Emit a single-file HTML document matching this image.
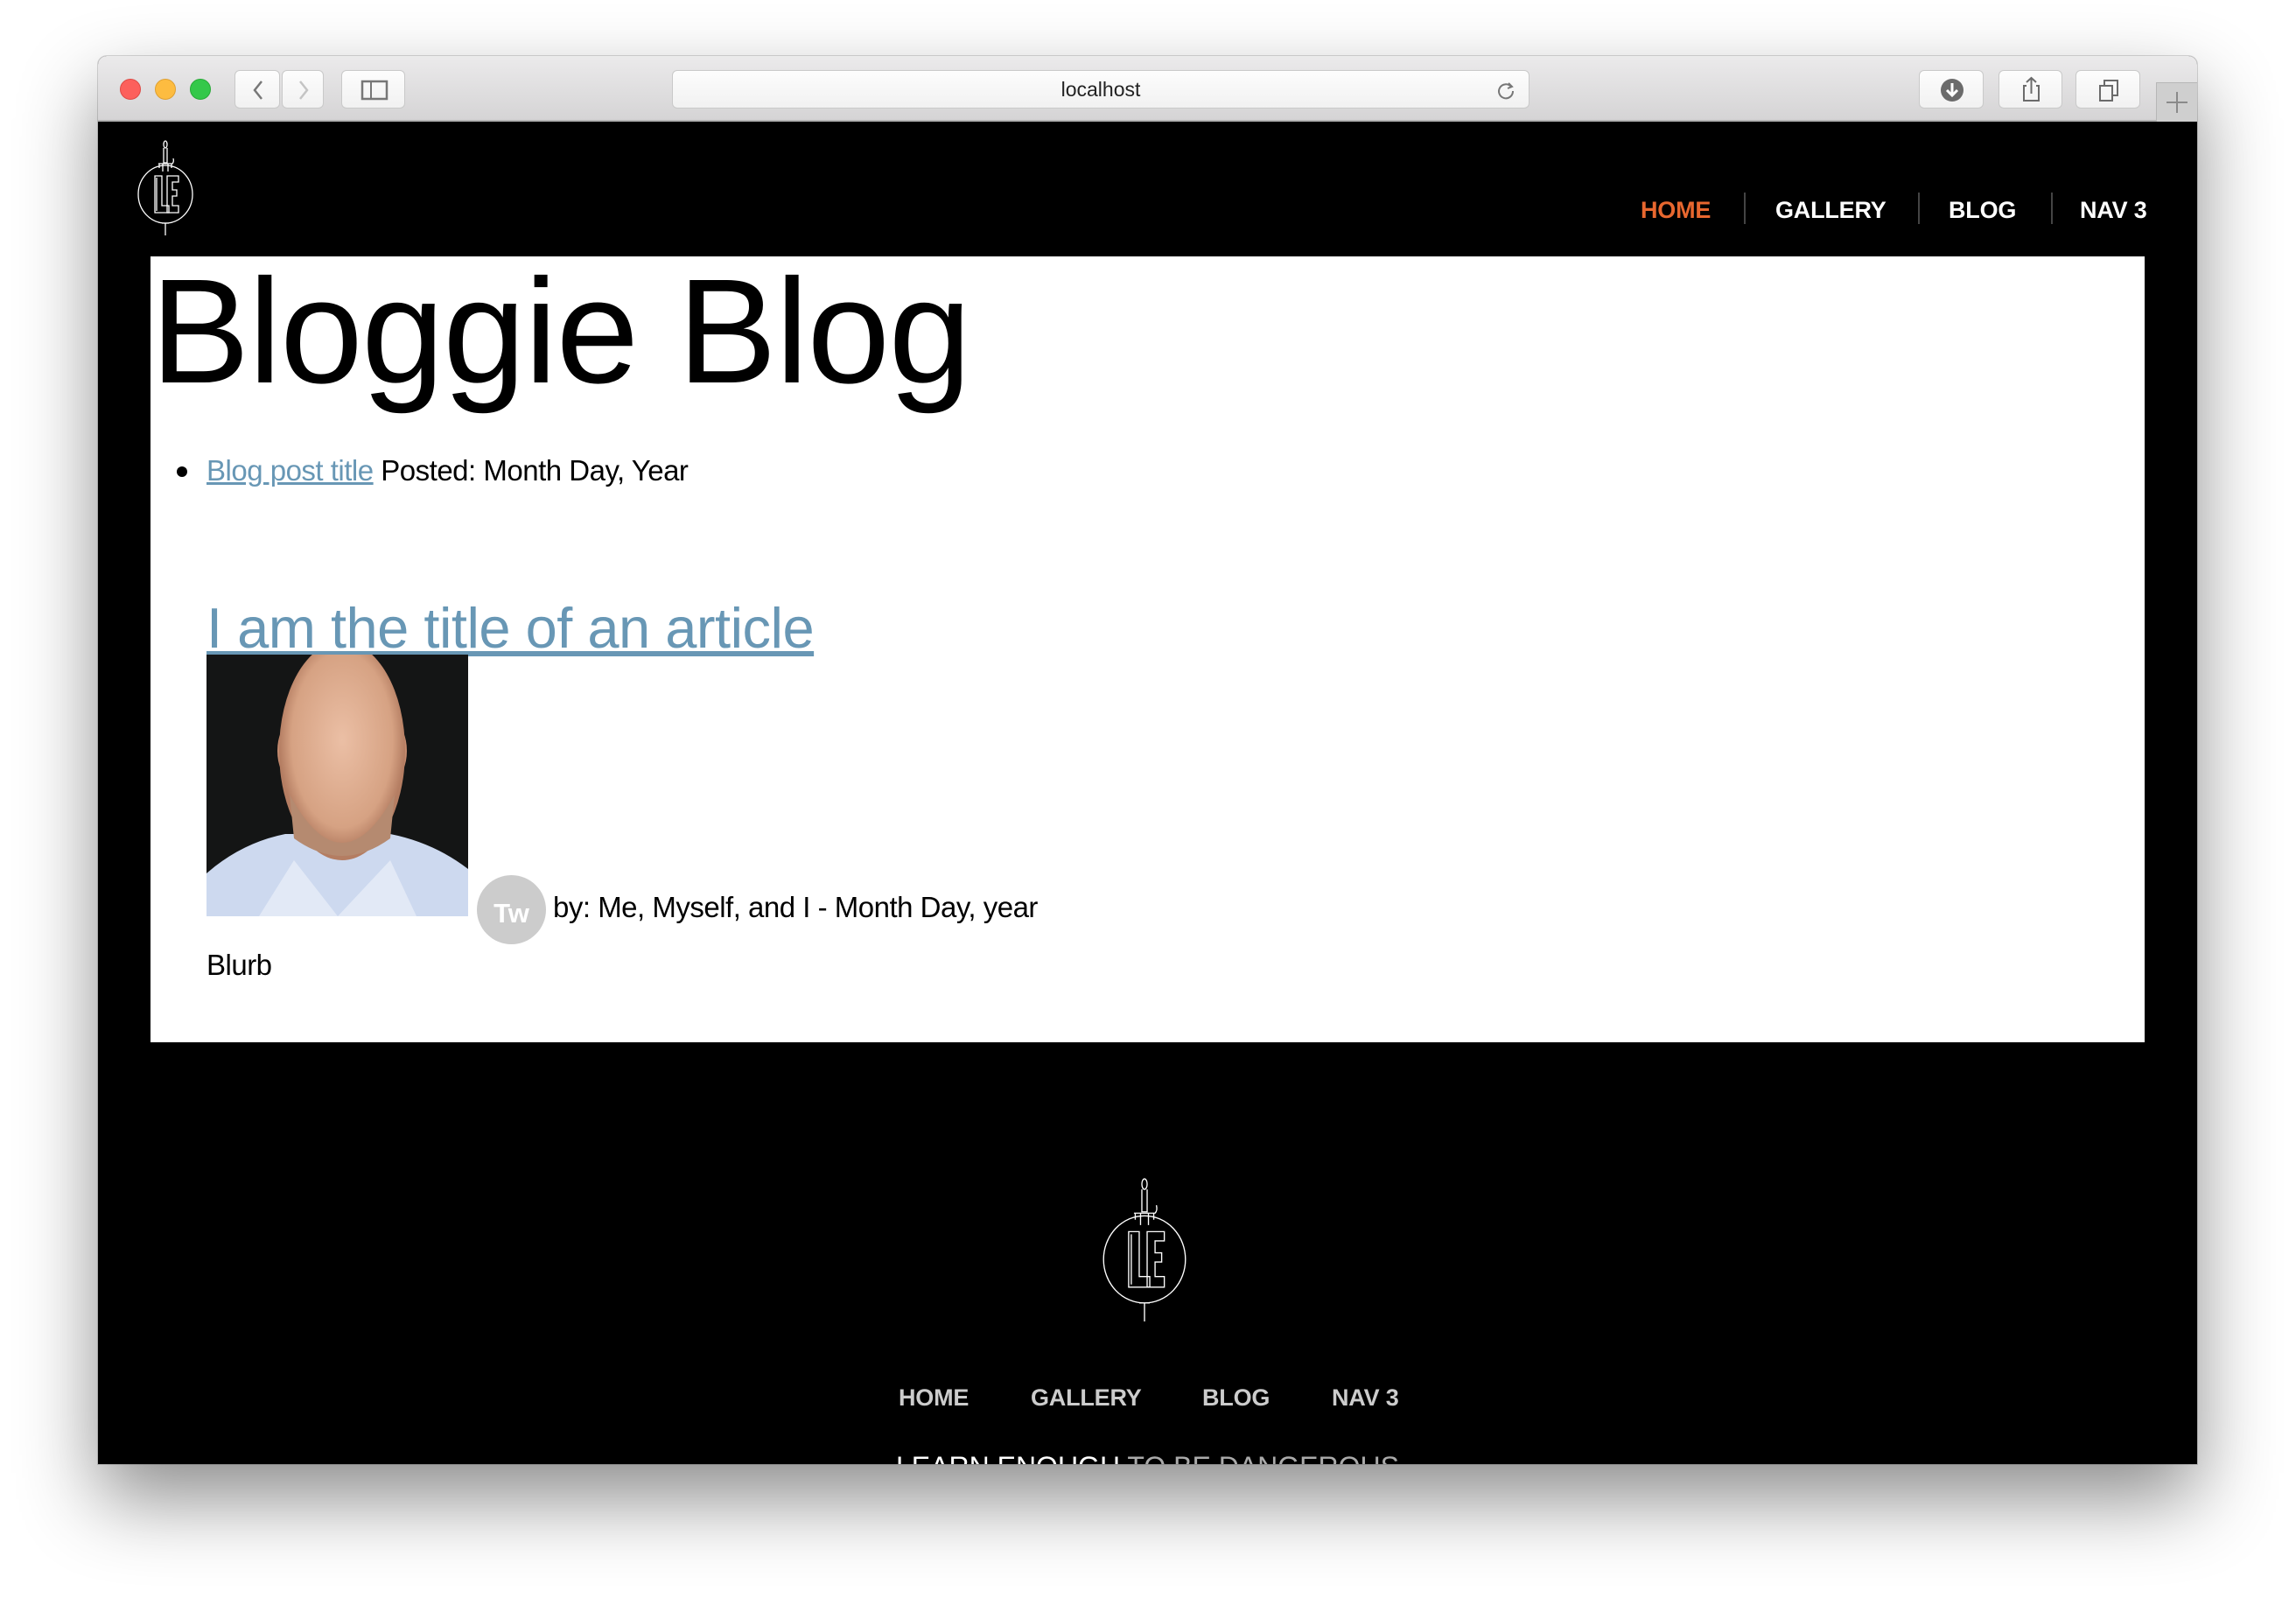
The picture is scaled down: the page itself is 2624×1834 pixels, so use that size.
<!DOCTYPE html>
<html><head><meta charset="utf-8">
<style>
*{margin:0;padding:0;box-sizing:border-box}
html,body{width:2624px;height:1834px;overflow:hidden;background:#fff;font-family:"Liberation Sans",Arial,sans-serif}
.win{position:absolute;left:112px;top:64px;width:2399px;height:1609px;border-radius:10px 10px 0 0;overflow:hidden;box-shadow:0 40px 90px rgba(0,0,0,.45),0 0 0 1px rgba(0,0,0,.15);background:#000}
.tb{position:absolute;left:0;top:0;width:100%;height:75px;background:linear-gradient(#ebeaeb,#d5d4d5);border-bottom:2px solid #b4b4b4}
.dot{position:absolute;top:26px;width:24px;height:24px;border-radius:50%}
.btn{position:absolute;top:16px;height:44px;background:linear-gradient(#fdfdfd,#f1f1f1);border:1px solid #c9c9c9;border-radius:6px}
.abs{position:absolute}
.nav{position:absolute;top:160px;font-weight:bold;font-size:27px;line-height:32px;color:#fff;letter-spacing:-.2px}
.sep{position:absolute;top:156px;width:2px;height:36px;background:#444}
.fnav{position:absolute;top:1517px;font-weight:bold;font-size:27px;line-height:32px;color:#ccc;letter-spacing:-.2px}
a{color:#6897b5}
</style></head><body>
<div class="win">
 <div class="tb">
  <div class="dot" style="left:25px;background:#fc605c;border:1px solid #de4a45"></div>
  <div class="dot" style="left:65px;background:#fdbc40;border:1px solid #dea032"></div>
  <div class="dot" style="left:105px;background:#34c84a;border:1px solid #27aa36"></div>
  <div class="btn" style="left:156px;width:52px"><svg width="52" height="44"><path d="M30 12 L22 22 L30 32" stroke="#777" stroke-width="2.5" fill="none"/></svg></div>
  <div class="btn" style="left:210px;width:48px"><svg width="48" height="44"><path d="M20 12 L28 22 L20 32" stroke="#c4c4c4" stroke-width="2.5" fill="none"/></svg></div>
  <div class="btn" style="left:278px;width:73px"><svg width="73" height="44"><rect x="23" y="12" width="28" height="20" stroke="#777" stroke-width="2.5" fill="none"/><line x1="33" y1="12" x2="33" y2="32" stroke="#777" stroke-width="2"/></svg></div>
  <div class="btn" style="left:656px;width:980px;text-align:center;line-height:42px;font-size:23px;color:#222">localhost
   <svg class="abs" style="right:14px;top:10px" width="24" height="24"><path d="M18 8 A8 8 0 1 0 20 13" stroke="#777" stroke-width="2" fill="none"/><path d="M15 4 L19 8 L14 10" stroke="#777" stroke-width="2" fill="none"/></svg></div>
  <div class="btn" style="left:2081px;width:74px"><svg width="74" height="44"><circle cx="37" cy="22" r="13" fill="#6b6b6b"/><path d="M37 14 V28 M31 22 L37 28 L43 22" stroke="#fff" stroke-width="3" fill="none"/></svg></div>
  <div class="btn" style="left:2172px;width:73px"><svg width="73" height="44"><path d="M31 17 H28 V34 H45 V17 H42 M36.5 8 V26 M31 13 L36.5 8 L42 13" stroke="#6b6b6b" stroke-width="2" fill="none"/></svg></div>
  <div class="btn" style="left:2260px;width:74px"><svg width="74" height="44"><rect x="27" y="17" width="14" height="17" stroke="#6b6b6b" stroke-width="2" fill="none"/><path d="M32 17 V11 H47 V28 H41" stroke="#6b6b6b" stroke-width="2" fill="none"/></svg></div>
  <div class="abs" style="left:2352px;top:30px;width:47px;height:45px;background:#cfcfcf;border-left:1px solid #b7b7b7;border-top:1px solid #b7b7b7"><svg width="47" height="45"><path d="M23 10 V34 M11 22 H35" stroke="#8a8a8a" stroke-width="2"/></svg></div>
 </div>

 <svg class="abs" style="left:44px;top:95px" width="66" height="110" viewBox="0 0 66 110">
  <g stroke="#fff" fill="none" stroke-width="1.3">
   <ellipse cx="33" cy="6" rx="2" ry="4"/><path d="M31 10 V27 H35 V10"/><path d="M25 28 H41 Q43 26 42 22 M26 28 V33 M40 28 V33"/>
   <path d="M30 28 V37 M36 28 V37"/>
   <ellipse cx="33" cy="63" rx="31" ry="33"/>
   <path d="M21 42 H29 V76 H37 V84 H21 Z M23 44 V82"/>
   <path d="M35 42 H48 V49 H41 V58 H46 V65 H41 V76 H48 V84 H35 Z"/>
   <path d="M29 96 H37 M33 96 L33 110"/>
  </g>
 </svg>

 <div class="nav" style="left:1763px;color:#e8672f">HOME</div>
 <div class="sep" style="left:1881px"></div>
 <div class="nav" style="left:1917px">GALLERY</div>
 <div class="sep" style="left:2080px"></div>
 <div class="nav" style="left:2115px">BLOG</div>
 <div class="sep" style="left:2232px"></div>
 <div class="nav" style="left:2265px">NAV 3</div>

 <div class="abs" style="left:60px;top:229px;width:2279px;height:898px;background:#fff">
  <div class="abs" style="left:0;top:-14px;font-size:170px;line-height:200px;color:#000;letter-spacing:-1.5px">Bloggie Blog</div>
  <div class="abs" style="left:30px;top:240px;width:12px;height:12px;border-radius:50%;background:#000"></div>
  <div class="abs" style="left:64px;top:225px;font-size:33px;line-height:40px;color:#000;letter-spacing:-.5px"><a href="#">Blog post title</a> Posted: Month Day, Year</div>
  <div class="abs" style="left:64px;top:385px;font-size:65px;line-height:80px;letter-spacing:-.5px"><a href="#">I am the title of an article</a></div>
  <svg class="abs" style="left:64px;top:455px" width="299" height="299">
   <defs><radialGradient id="f" cx=".5" cy=".45" r=".5"><stop offset="0" stop-color="#ebbfa5"/><stop offset=".8" stop-color="#d6a283"/><stop offset="1" stop-color="#b47d62"/></radialGradient></defs>
   <rect width="299" height="299" fill="#141515"/>
   <path d="M0 250 Q40 215 90 205 L210 205 Q260 215 299 245 V299 H0Z" fill="#cdd9ef"/>
   <ellipse cx="95" cy="110" rx="14" ry="30" fill="#c48a6e"/>
   <ellipse cx="215" cy="110" rx="14" ry="30" fill="#c48a6e"/>
   <ellipse cx="155" cy="110" rx="72" ry="125" fill="url(#f)"/>
   <path d="M95 160 Q155 270 215 160 L210 210 Q155 250 100 210Z" fill="#b58a70"/>
   <path d="M100 235 L150 299 L210 235 L240 299 H60Z" fill="#e2e9f6"/>
  </svg>
  <div class="abs" style="left:373px;top:707px;width:79px;height:79px;border-radius:50%;background:#ccc;color:#fff;font-weight:bold;font-size:31px;text-align:center;line-height:88px">Tw</div>
  <div class="abs" style="left:460px;top:724px;font-size:33px;line-height:40px;color:#000;letter-spacing:-.5px">by: Me, Myself, and I - Month Day, year</div>
  <div class="abs" style="left:64px;top:790px;font-size:33px;line-height:40px;color:#000;letter-spacing:-.5px">Blurb</div>
 </div>

 <svg class="abs" style="left:1144px;top:1280px" width="104" height="166" viewBox="0 0 66 110">
  <g stroke="#fff" fill="none" stroke-width="0.9">
   <ellipse cx="33" cy="6" rx="2" ry="4"/><path d="M31 10 V27 H35 V10"/><path d="M25 28 H41 Q43 26 42 22 M26 28 V33 M40 28 V33"/>
   <path d="M30 28 V37 M36 28 V37"/>
   <ellipse cx="33" cy="63" rx="31" ry="33"/>
   <path d="M21 42 H29 V76 H37 V84 H21 Z M23 44 V82"/>
   <path d="M35 42 H48 V49 H41 V58 H46 V65 H41 V76 H48 V84 H35 Z"/>
   <path d="M29 96 H37 M33 96 L33 110"/>
  </g>
 </svg>

 <div class="fnav" style="left:915px">HOME</div>
 <div class="fnav" style="left:1066px">GALLERY</div>
 <div class="fnav" style="left:1262px">BLOG</div>
 <div class="fnav" style="left:1410px">NAV 3</div>
 <div class="abs" style="left:912px;top:1592px;font-size:32px;line-height:40px;color:#fff;white-space:nowrap">LEARN ENOUGH <span style="color:#aaa">TO BE DANGEROUS</span></div>
</div>
</body></html>
